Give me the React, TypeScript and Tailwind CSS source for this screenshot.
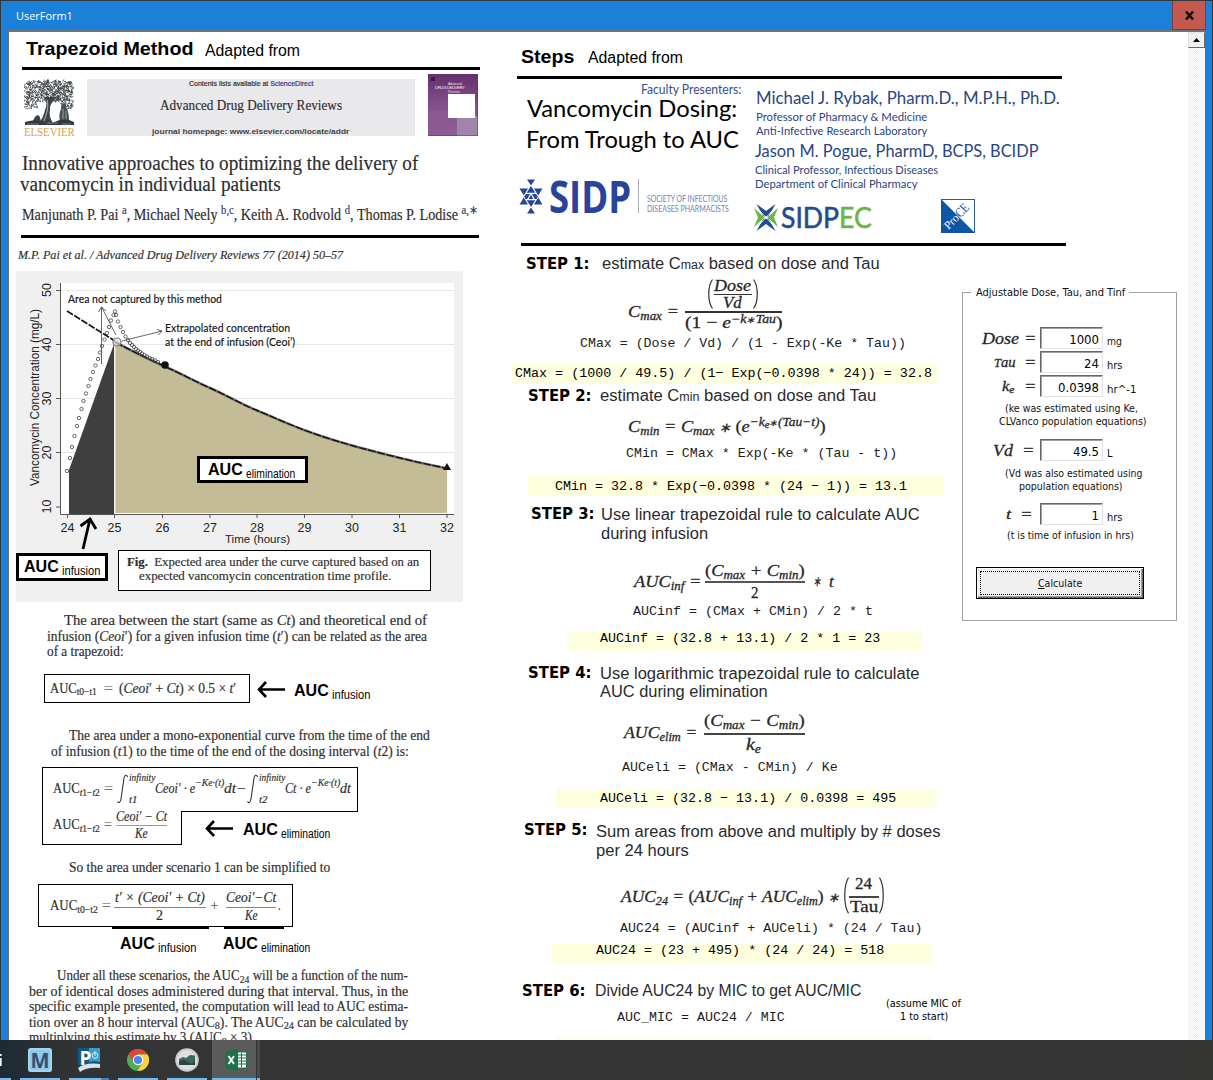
import { useLayoutEffect, useRef, useState } from "react";
import type { ReactNode } from "react";

/** One line of text, stretched or condensed to the width of its box. */
function T({ className = "", children }: { className?: string; children: ReactNode }) {
  const box = useRef<HTMLDivElement>(null);
  const ink = useRef<HTMLSpanElement>(null);
  const [k, setK] = useState(1);
  useLayoutEffect(() => {
    if (box.current && ink.current && ink.current.offsetWidth > 0) {
      setK(box.current.clientWidth / ink.current.offsetWidth);
    }
  }, []);
  return (
    <div ref={box} className={"shrink-0 whitespace-nowrap " + className}>
      <span ref={ink} className="inline-block origin-left" style={{ transform: `scaleX(${k})` }}>
        {children}
      </span>
    </div>
  );
}

const serif = "font-['Liberation_Serif',serif] text-[#2b2b2b] [-webkit-text-stroke:0.2px_#444] ";
const sans = "font-['Liberation_Sans',sans-serif] ";
const lato = "font-['Lato',sans-serif] ";
const tahoma = "font-['DejaVu_Sans_Condensed','DejaVu_Sans',sans-serif] ";
const math = "font-['Liberation_Serif',serif] italic text-[#222] [-webkit-text-stroke:0.3px_#333] [&_sub]:text-[70%] ";
const mono = "font-['Liberation_Mono',monospace] ";

function AucLabel({ kind }: { kind: "infusion" | "elimination" }) {
  return (
    <div className={sans + "flex text-black [-webkit-text-stroke:0px]"}>
      <T className="w-[35px] text-[16.5px] leading-[20px] font-bold">AUC</T>
      <T
        className={
          kind === "infusion"
            ? "mt-[5px] ml-[3px] w-[38px] text-[12px] leading-[20px]"
            : "mt-[5px] ml-[3px] w-[49px] text-[12px] leading-[20px]"
        }
      >
        {kind}
      </T>
    </div>
  );
}

function LeftArrow() {
  return (
    <svg width="28" height="17" viewBox="0 0 28 17" fill="none" stroke="#000" strokeWidth="2.6">
      <path d="M28 8.5H2M9 1L2 8.5L9 16" />
    </svg>
  );
}

function ElsevierTree() {
  const strokes: string[] = [];
  let s = 7;
  const rnd = () => ((s = (s * 16807) % 2147483647) / 2147483647);
  for (let i = 0; i < 900; i++) {
    const x = 1 + rnd() * 48;
    const edge = Math.abs(x - 25) / 25;
    const y = 1 + edge * 2 + rnd() * (edge > 0.5 ? 27 : 21);
    strokes.push(`M${x.toFixed(1)} ${y.toFixed(1)}l${(rnd() * 4 - 2).toFixed(1)} ${(rnd() * 3 - 1.5).toFixed(1)}`);
  }
  return (
    <svg width="51" height="47" viewBox="0 0 51 47" fill="none">
      <path d={strokes.join("")} stroke="#3b4245" strokeWidth="0.9" />
      <path d="M20 18c3 4 3 9 1 13c-1 5-3 9-6 13h14c-3-4-4-9-3-14c0-5 3-8 7-12" fill="#3d4447" />
      <path d="M23 21c2 6 0 13-3 21" stroke="#ccc" strokeWidth="0.8" />
      <path d="M38 25c3-2 5 0 4 3c3 5 3 10 3 15h-9c-1-5-1-9 1-13z" fill="#4a5154" />
      <path d="M39 30v12M42 32v9" stroke="#bbb" strokeWidth="0.7" />
      <path d="M11 38c2-3 5-2 5 1l2 6H7z" fill="#3d4447" />
      <path d="M1 43q8-3 16 0t16-1t17 1v3H1z" fill="#33393c" />
      <path d="M3 45h12M24 44h10M38 45h9" stroke="#aaa" strokeWidth="0.6" />
    </svg>
  );
}

function Cover() {
  return (
    <svg className="mt-[4px] ml-[13px] shrink-0" width="50" height="62" viewBox="0 0 50 62">
      <defs>
        <linearGradient id="cov" x1="0" y1="0" x2="0" y2="1">
          <stop offset="0" stopColor="#64306c" />
          <stop offset="0.6" stopColor="#86558f" />
          <stop offset="1" stopColor="#8d5f97" />
        </linearGradient>
      </defs>
      <rect width="50" height="62" fill="url(#cov)" />
      <rect x="29" y="42" width="21" height="20" fill="#a184ac" />
      <rect x="0" y="37" width="20" height="25" fill="#8a5a90" />
      <rect x="3" y="3" width="4" height="4" fill="#3d1a48" />
      <path d="M50 0V62H0" fill="none" stroke="#54345e" />
      <text x="20" y="11" fontSize="3.6" fill="#e6d6ea" fontFamily="Liberation Sans" textLength="14">Advanced</text>
      <text x="7" y="15" fontSize="4.4" fill="#f2e8f4" fontFamily="Liberation Sans" textLength="30">DRUG DELIVERY</text>
      <text x="20" y="19" fontSize="3.4" fill="#e6d6ea" fontFamily="Liberation Sans" textLength="12">Reviews</text>
      <rect x="20" y="20" width="27" height="24" fill="#fff" />
    </svg>
  );
}

const rising = [
  [67, 471], [70, 458], [72, 447], [74.5, 436], [77, 426], [79, 418], [81.5, 409], [83.5, 401], [86, 393.5],
  [88.5, 386], [90.5, 379], [93, 372], [95.5, 365.5], [98, 359], [100, 352.5], [102, 346], [104.5, 339.5],
  [107, 333], [109, 327], [111, 320.5], [113.5, 315], [115, 311.5], [116, 315], [118, 321.5], [120.5, 327],
  [123, 332], [125.5, 336.5], [128, 340], [130, 343], [132, 345], [134, 347], [136, 349], [138, 350.5],
  [140, 352], [142, 353.5], [144.5, 355], [147, 356.5], [149.5, 358], [152, 359], [155, 360.5], [158, 362],
];
const decay = "M115 342C132 351 148 359 165 366.500S195 381.500 210 388S241 404 257 410.500S288 424 304 430S336 441 352 445.500S384 454 400 458S431 465 447 468.500";

function Figure() {
  return (
    <div className="relative mt-[6px] ml-[7px] h-[331px] w-[447px] shrink-0 bg-[#f0f0f0]">
      <svg width="447" height="331" viewBox="16 271 447 331" fontFamily="Liberation Sans" fill="#222">
        <rect x="60" y="283" width="394" height="231" fill="#fff" />
        <path d="M60 290.500H454M60 344.500H454M60 398.500H454M60 452.500H454" stroke="#e6e6e6" />
        <path d="M69 470L114 344V514H69z" fill="#3f3f3f" />
        <path d={decay + "V513H115z"} fill="#c4bc96" />
        <path d="M115 344V513" stroke="#e8e6da" strokeWidth="1.4" />
        <path d="M60.500 283V514.500H454" fill="none" stroke="#555" />
        <path
          d="M56 290.500H60M56 344.500H60M56 398.500H60M56 452.500H60M56 507H60M67.500 514V518M114.500 514V518M162.500 514V518M210 514V518M257 514V518M304.500 514V518M352 514V518M399.500 514V518M447 514V518"
          stroke="#555"
        />
        <path d={decay} fill="none" stroke="#777" strokeWidth="2.6" />
        <path d="M67 311L115 341" stroke="#111" strokeWidth="1.6" strokeDasharray="7 1.500" />
        <path d={decay} fill="none" stroke="#111" strokeWidth="1.4" strokeDasharray="8 1.500" />
        {rising.map(([x, y]) => (
          <circle key={x + "-" + y} cx={x} cy={y} r="1.7" fill="none" stroke="#444" strokeWidth="0.8" />
        ))}
        <circle cx="117" cy="342" r="4" fill="#ddd" fillOpacity="0.7" stroke="#777" strokeWidth="1.2" />
        <circle cx="165" cy="365" r="3.8" fill="#111" />
        <path d="M443 470L447 463L451 470z" fill="#111" />
        <path
          d="M101.500 364V307M98.500 312L101.500 307L106 311M116 335L101.500 307M122 341L162 331M157 329.500L162 331L158.500 335"
          fill="none"
          stroke="#555"
          strokeWidth="0.9"
        />
        <path d="M83 549L90 519M80.500 526L90 519L96 529" fill="none" stroke="#000" strokeWidth="2.8" />
        <g fontSize="11.2" fontFamily="Lato" fill="#111" stroke="#222" strokeWidth="0.15">
          <text x="68" y="303" textLength="154" lengthAdjust="spacingAndGlyphs">Area not captured by this method</text>
          <text x="165" y="332" textLength="125" lengthAdjust="spacingAndGlyphs">Extrapolated concentration</text>
          <text x="165" y="345.500" textLength="130" lengthAdjust="spacingAndGlyphs">at the end of infusion (Ceoi’)</text>
        </g>
        <g fontSize="12.5" textAnchor="middle">
          {[67.5, 114.5, 162.5, 210, 257, 304.5, 352, 399.5, 447].map((x, i) => (
            <text key={x} x={x} y="532">{24 + i}</text>
          ))}
          {[290, 344.5, 398.5, 452.5, 506.5].map((y, i) => (
            <text key={y} transform={`translate(50.500 ${y}) rotate(-90)`}>{50 - i * 10}</text>
          ))}
        </g>
        <text x="225" y="543" fontSize="11.300" textLength="65" lengthAdjust="spacingAndGlyphs">Time (hours)</text>
        <text transform="translate(38.500 486) rotate(-90)" fontSize="12" textLength="177" lengthAdjust="spacingAndGlyphs">
          Vancomycin Concentration (mg/L)
        </text>
      </svg>
      <div className="absolute top-[185px] left-[181px] h-[27px] w-[111px] border-[3px] border-black bg-white pl-[8px]">
        <AucLabel kind="elimination" />
      </div>
      <div className="absolute top-[282px] left-0 h-[28px] w-[92px] border-[3px] border-black bg-white pl-[5px]">
        <AucLabel kind="infusion" />
      </div>
      <div className={serif + "absolute top-[279px] left-[102px] h-[41px] w-[313px] border border-black bg-white pt-[4px] text-[13.5px]"}>
        <T className="ml-[8px] w-[292px] leading-[14px]">
          <b>Fig.</b>&nbsp; Expected area under the curve captured based on an
        </T>
        <T className="ml-[20px] w-[252px] leading-[14px]">expected vancomycin concentration time profile.</T>
      </div>
    </div>
  );
}

function Integral({ low }: { low: string }) {
  return (
    <div className="flex">
      <svg width="11" height="30" viewBox="0 0 11 30" fill="none" stroke="#333" strokeWidth="1.1">
        <path d="M10.500 3C10 0.500 7.500 0.500 7 4L4 25C3.500 28.500 1.500 29.500 0.500 27.500" />
      </svg>
      <div>
        <T className="mt-[-3px] ml-[1px] w-[26px] text-[10px] leading-[14px]">infinity</T>
        <T className="mt-[9px] ml-[1px] w-[8px] text-[9.500px] leading-[12px]">{low}</T>
      </div>
    </div>
  );
}

function LeftColumn() {
  return (
    <div className="flex w-[496px] shrink-0 flex-col">
      <div className={sans + "flex h-[35px] shrink-0 text-black"}>
        <T className="mt-[6px] ml-[17px] w-[168px] text-[19px] leading-[21px] font-bold">Trapezoid Method</T>
        <T className="mt-[8px] ml-[11px] w-[95px] text-[16px] leading-[21px]">Adapted from</T>
      </div>
      <div className="ml-[13px] h-[3px] w-[458px] shrink-0 bg-black" />
      <div className="flex h-[66px] shrink-0">
        <div className="mt-[9px] ml-[15px] w-[51px]">
          <ElsevierTree />
          <T className="w-[51px] font-['Liberation_Serif',serif] text-[12px] leading-[12px] text-[#d5a04d]">ELSEVIER</T>
        </div>
        <div className="mt-[9px] ml-[12px] flex h-[57px] w-[328px] flex-col bg-[#e9e9eb]">
          <T className={sans + "ml-[102px] w-[124px] text-[7.5px] leading-[9px] text-[#333] [-webkit-text-stroke:0.2px]"}>
            Contents lists available at <span className="text-[#2d3a8c]">ScienceDirect</span>
          </T>
          <T className={serif + "mt-[8px] ml-[73px] w-[182px] text-[15px] leading-[19px]"}>Advanced Drug Delivery Reviews</T>
          <T className={sans + "mt-[12px] ml-[65px] w-[197px] text-[8px] leading-[9px] font-bold text-[#444]"}>
            journal homepage: www.elsevier.com/locate/addr
          </T>
        </div>
        <Cover />
      </div>
      <div className={serif + "shrink-0 text-[20px] leading-[20px]"}>
        <T className="mt-[17px] ml-[13px] w-[396px]">Innovative approaches to optimizing the delivery of</T>
        <T className="mt-[1px] ml-[11px] w-[261px]">vancomycin in individual patients</T>
      </div>
      <T className={serif + "mt-[10px] ml-[13px] h-[20px] w-[456px] text-[16px] leading-[21px] [&_sup]:text-[#2d3a8c]"}>
        Manjunath P. Pai <sup>a</sup>, Michael Neely <sup>b,c</sup>, Keith A. Rodvold <sup>d</sup>, Thomas P. Lodise <sup>a,∗</sup>
      </T>
      <div className="mt-[11px] ml-[12px] h-[3px] w-[458px] shrink-0 bg-black" />
      <T className={serif + "mt-[7px] ml-[9px] w-[325px] text-[13.5px] leading-[20px] italic"}>
        M.P. Pai et al. / Advanced Drug Delivery Reviews 77 (2014) 50–57
      </T>
      <Figure />
      <div className={serif + "mt-[10px] h-[48px] shrink-0 text-[14.3px] leading-[16px]"}>
        <T className="ml-[55px] w-[363px]">The area between the start (same as <i>Ct</i>) and theoretical end of</T>
        <T className="ml-[38px] w-[380px]">infusion (<i>Ceoi</i>′) for a given infusion time (<i>t</i>′) can be related as the area</T>
        <T className="mt-[-1px] ml-[38px] w-[77px]">of a trapezoid:</T>
      </div>
      <div className="mt-[14px] ml-[35px] flex h-[29px] shrink-0">
        <div className={serif + "flex w-[206px] items-center border border-black text-[14px] leading-[20px]"}>
          <T className="ml-[5px] w-[47px]">AUC<sub>t0−t1</sub></T>
          <T className="ml-[7px] w-[9px] text-[#888]">=</T>
          <T className="ml-[6px] w-[117px]">(<i>Ceoi</i>′ + <i>Ct</i>) × 0.5 × <i>t</i>′</T>
        </div>
        <div className="mt-[7px] ml-[7px]"><LeftArrow /></div>
        <div className="mt-[6px] ml-[9px]"><AucLabel kind="infusion" /></div>
      </div>
      <div className={serif + "mt-[24px] h-[32px] shrink-0 text-[14.3px] leading-[16px]"}>
        <T className="ml-[60px] w-[361px]">The area under a mono-exponential curve from the time of the end</T>
        <T className="ml-[42px] w-[358px]">of infusion (<i>t</i>1) to the time of the end of the dosing interval (<i>t</i>2) is:</T>
      </div>
      <div className={serif + "mt-[8px] ml-[33px] shrink-0 text-[14px] leading-[20px]"}>
        <div className="flex h-[45px] w-[316px] border border-black">
          <T className="mt-[11px] ml-[10px] w-[47px]">AUC<sub><i>t</i>1−<i>t</i>2</sub></T>
          <T className="mt-[11px] ml-[4px] w-[9px] text-[#888]">=</T>
          <div className="mt-[6px] ml-[4px] w-[38px] italic"><Integral low="t1" /></div>
          <T className="mt-[11px] w-[40px] italic">Ceoi′ · e</T>
          <T className="mt-[5px] w-[29px] text-[10.5px] italic">−Ke·(t)</T>
          <T className="mt-[11px] w-[22px] italic">dt−</T>
          <div className="mt-[6px] ml-[1px] w-[38px] italic"><Integral low="t2" /></div>
          <T className="mt-[11px] w-[26px] italic">Ct · e</T>
          <T className="mt-[5px] w-[29px] text-[10.5px] italic">−Ke·(t)</T>
          <T className="mt-[11px] w-[11px] italic">dt</T>
        </div>
        <div className="mt-[-1px] flex h-[34px]">
          <div className="relative flex w-[140px] border-r border-b border-l border-black bg-white">
            <T className="mt-[4px] ml-[10px] w-[47px]">AUC<sub><i>t</i>1−<i>t</i>2</sub></T>
            <T className="mt-[4px] ml-[4px] w-[8px] text-[#888]">=</T>
            <div className="mt-[-3px] ml-[4px] w-[51px] italic">
              <T className="w-[51px] leading-[17px]">Ceoi′ − Ct</T>
              <div className="h-px bg-[#999]" />
              <T className="ml-[19px] w-[13px] leading-[15px]">Ke</T>
            </div>
          </div>
          <div className="mt-[9px] ml-[23px]"><LeftArrow /></div>
          <div className="mt-[8px] ml-[10px]"><AucLabel kind="elimination" /></div>
        </div>
      </div>
      <T className={serif + "mt-[14px] ml-[60px] h-[16px] w-[261px] text-[14.3px] leading-[16px]"}>So the area under scenario 1 can be simplified to</T>
      <div className={serif + "mt-[9px] ml-[29px] flex h-[43px] w-[255px] shrink-0 border border-black text-[14px] leading-[20px]"}>
        <T className="mt-[11px] ml-[11px] w-[48px]">AUC<sub>t0−t2</sub></T>
        <T className="mt-[11px] ml-[4px] w-[9px] text-[#888]">=</T>
        <div className="mt-[4px] ml-[3px] w-[92px]">
          <T className="ml-[1px] w-[90px] leading-[18px] italic">t′ × (Ceoi′ + Ct)</T>
          <div className="h-px bg-[#888]" />
          <T className="ml-[42px] w-[7px] leading-[15px]">2</T>
        </div>
        <T className="mt-[11px] ml-[5px] w-[7px] text-[#777]">+</T>
        <div className="mt-[4px] ml-[8px] w-[50px] italic">
          <T className="w-[50px] leading-[18px]">Ceoi′−Ct</T>
          <div className="h-px bg-[#888]" />
          <T className="ml-[19px] w-[13px] leading-[15px]">Ke</T>
        </div>
        <T className="mt-[11px] ml-[2px] w-[3px]">.</T>
      </div>
      <div className="flex h-[2px] shrink-0">
        <div className="ml-[103px] w-[97px] bg-black" />
        <div className="ml-[15px] w-[60px] bg-black" />
      </div>
      <div className="mt-[4px] flex h-[20px] shrink-0">
        <div className="ml-[111px]"><AucLabel kind="infusion" /></div>
        <div className="ml-[27px]"><AucLabel kind="elimination" /></div>
      </div>
      <div className={serif + "mt-[15px] shrink-0 text-[14.3px] leading-[15.6px]"}>
        <T className="ml-[48px] w-[351px]">Under all these scenarios, the AUC<sub>24</sub> will be a function of the num-</T>
        <T className="ml-[20px] w-[379px]">ber of identical doses administered during that interval. Thus, in the</T>
        <T className="ml-[20px] w-[379px]">specific example presented, the computation will lead to AUC estima-</T>
        <T className="ml-[20px] w-[379px]">tion over an 8 hour interval (AUC<sub>8</sub>). The AUC<sub>24</sub> can be calculated by</T>
        <T className="ml-[20px] w-[223px]">multiplying this estimate by 3 (AUC<sub>8</sub> × 3)</T>
      </div>
    </div>
  );
}

function SidpMark() {
  return (
    <svg width="24" height="35" viewBox="0 0 24 35" fill="#27439a">
      <path d="M8 0.500H16L12 6.500z M8 34.500H16L12 28.500z" />
      <path d="M12 7L16.300 13.800H7.700z M12 28L7.700 21.200H16.300z" />
      <path d="M0.500 9.500H9L4.800 16.500z M15 9.500H23.500L19.200 16.500z" />
      <path d="M0.500 25.500L4.800 18.500L9 25.500z M15 25.500L19.200 18.500L23.500 25.500z" />
      <path d="M7 15H11L8.300 20H6.400L5.200 17.500z M17 15H13L15.700 20H17.600L18.800 17.500z M12 15.500L14.300 20H9.700z" />
    </svg>
  );
}

function SidpecMark() {
  return (
    <svg width="24" height="27" viewBox="0 0 24 27">
      <path d="M2.500 0L12 7L21.500 0L14.500 12.500H9.500z" fill="#1f4d8f" />
      <path d="M2.500 27L12 20L21.500 27L14.500 14.500H9.500z" fill="#1f4d8f" />
      <path d="M0 4L10.500 13.500L0 23L4 13.500z" fill="#6db544" />
      <path d="M24 4L13.500 13.500L24 23L20 13.500z" fill="#6db544" />
      <path d="M6 7L18 20M18 7L6 20" stroke="#fff" strokeWidth="0.8" />
      <circle cx="12" cy="13.500" r="1.6" fill="#fff" />
    </svg>
  );
}

function ProCe() {
  return (
    <svg width="34" height="34" viewBox="0 0 34 34" fontFamily="Liberation Serif">
      <rect x="0.500" y="0.500" width="33" height="33" fill="#fff" stroke="#2a5d9c" />
      <path d="M0 0L34 34H0z" fill="#0d55a5" />
      <g transform="translate(7.500 31) rotate(-45)">
        <text x="0" y="0" fontSize="11.500" fill="#fff" textLength="16" lengthAdjust="spacingAndGlyphs">Pro</text>
        <text x="16.500" y="0" fontSize="13.500" fill="#0d55a5" textLength="14" lengthAdjust="spacingAndGlyphs">CE</text>
      </g>
    </svg>
  );
}

function PresenterHeader() {
  return (
    <>
      <div className={sans + "flex h-[44px] shrink-0 text-black"}>
        <T className="mt-[15px] ml-[16px] w-[53px] text-[18.5px] leading-[20px] font-bold">Steps</T>
        <T className="mt-[15px] ml-[14px] w-[95px] text-[16px] leading-[21px]">Adapted from</T>
      </div>
      <div className="ml-[12px] h-[3px] w-[545px] shrink-0 bg-black" />
      <div className={lato + "flex h-[164px] shrink-0"}>
        <div className="w-[249px]">
          <T className="mt-[4px] ml-[136px] w-[100px] text-[12.5px] leading-[14px] text-[#33508c]">Faculty Presenters:</T>
          <T className="ml-[22px] w-[210px] text-[23.5px] leading-[23px] text-black">Vancomycin Dosing:</T>
          <T className="mt-[8px] ml-[21px] w-[213px] text-[23.5px] leading-[23px] text-black">From Trough to AUC</T>
          <div className="mt-[28px] ml-[14px] flex">
            <SidpMark />
            <T className="ml-[6px] w-[82px] font-['Open_Sans',sans-serif] text-[45px] leading-[33px] font-bold text-[#27439a]">SIDP</T>
            <div className="ml-[7px] h-[34px] w-px bg-[#aab]" />
            <div className="mt-[15px] ml-[8px] w-[82px] text-[8.5px] leading-[10px] text-[#7382aa]">
              <T className="w-[80px]">SOCIETY OF INFECTIOUS</T>
              <T className="w-[82px]">DISEASES PHARMACISTS</T>
            </div>
          </div>
        </div>
        <div className="text-[#2a4584]">
          <T className="mt-[9px] ml-[2px] w-[304px] text-[16.5px] leading-[20px]">Michael J. Rybak, Pharm.D., M.P.H., Ph.D.</T>
          <T className="mt-[2px] ml-[2px] w-[171px] text-[12px] leading-[14px]">Professor of Pharmacy &amp; Medicine</T>
          <T className="ml-[2px] w-[171px] text-[12px] leading-[14px]">Anti-Infective Research Laboratory</T>
          <T className="mt-[3px] ml-[1px] w-[284px] text-[16.5px] leading-[20px]">Jason M. Pogue, PharmD, BCPS, BCIDP</T>
          <T className="mt-[2px] ml-[1px] w-[183px] text-[12px] leading-[14px]">Clinical Professor, Infectious Diseases</T>
          <T className="ml-[1px] w-[163px] text-[12px] leading-[14px]">Department of Clinical Pharmacy</T>
          <div className="mt-[8px] flex">
            <div className="mt-[5px]"><SidpecMark /></div>
            <T className="mt-[7px] ml-[3px] w-[91px] text-[29.5px] leading-[22px] text-[#1f4d8f] [-webkit-text-stroke:0.6px]">
              SIDP<span className="text-[#6db544]">EC</span>
            </T>
            <div className="ml-[69px]"><ProCe /></div>
          </div>
        </div>
      </div>
      <div className="ml-[16px] h-[3px] w-[545px] shrink-0 bg-black" />
    </>
  );
}

const stepNo = "font-['DejaVu_Sans_Condensed','DejaVu_Sans',sans-serif] text-[15.5px] font-bold text-black ";
const stepTxt = "font-['Liberation_Sans',sans-serif] text-[16px] text-[#2a2a2e] ";
const hilite = mono + "shrink-0 bg-[#feffdf] text-[13.3px] text-black ";
const code = mono + "text-[13px] leading-[20px] text-[#1c1c1c] ";

function Paren({ h, flip }: { h: number; flip?: boolean }) {
  return (
    <svg className={flip ? "-scale-x-100" : ""} width="6" height={h} viewBox="0 0 6 30" preserveAspectRatio="none" fill="none" stroke="#333" strokeWidth="1.2">
      <path d="M5.500 0.500C0.500 7 0.500 23 5.500 29.500" />
    </svg>
  );
}

function Steps() {
  return (
    <div className="flex w-[457px] shrink-0 flex-col leading-[20px]">
      <div className="mt-[8px] flex shrink-0">
        <T className={stepNo + "ml-[21px] w-[63px]"}>STEP 1:</T>
        <T className={stepTxt + "ml-[13px] w-[278px]"}>estimate C<span className="text-[12px]">max</span> based on dose and Tau</T>
      </div>
      <div className={math + "mt-[4px] flex h-[54px] shrink-0 text-[17px]"}>
        <T className="mt-[23px] ml-[123px] w-[51px]">C<sub>max</sub> =</T>
        <div className="ml-[6px] w-[97px]">
          <div className="ml-[22px] flex h-[32px]">
            <Paren h={30} />
            <div className="ml-[1px] w-[38px] text-[16px]">
              <T className="mt-[-2px] w-[37px] leading-[17px]">Dose</T>
              <div className="h-px bg-[#333]" />
              <T className="ml-[9px] w-[19px] leading-[16px]">Vd</T>
            </div>
            <div className="ml-[1px]"><Paren h={30} flip /></div>
          </div>
          <div className="h-[1.500px] bg-[#333]" />
          <T className="w-[97px]">
            <span className="not-italic">(1 − </span>e<sup className="top-[-5px] text-[12px]">−k<span className="text-[9px]">∗</span>Tau</sup><span className="not-italic">)</span>
          </T>
        </div>
      </div>
      <T className={code + "mt-[1px] ml-[75px] w-[326px]"}>CMax = (Dose / Vd) / (1 - Exp(-Ke * Tau))</T>
      <div className={hilite + "mt-[9px] ml-[7px] h-[21px] w-[425px] leading-[22px]"}>
        <T className="ml-[3px] w-[417px]">CMax = (1000 / 49.5) / (1− Exp(−0.0398 * 24)) = 32.8</T>
      </div>
      <div className="mt-[2px] flex shrink-0">
        <T className={stepNo + "ml-[23px] w-[63px]"}>STEP 2:</T>
        <T className={stepTxt + "ml-[9px] w-[276px]"}>estimate C<span className="text-[12px]">min</span> based on dose and Tau</T>
      </div>
      <T className={math + "mt-[10px] ml-[123px] h-[20px] w-[198px] text-[17px]"}>
        C<sub>min</sub> = C<sub>max</sub> <span className="text-[13px]">∗</span> <span className="not-italic">(</span>e<sup className="text-[12.5px]">−k<span className="relative top-[2px] text-[10px]">e</span><span className="text-[9px]">∗</span>(Tau−t)</sup><span className="not-italic">)</span>
      </T>
      <T className={code + "mt-[7px] ml-[121px] w-[271px]"}>CMin = CMax * Exp(-Ke * (Tau - t))</T>
      <div className={hilite + "mt-[12px] ml-[23px] h-[20px] w-[416px] leading-[21px]"}>
        <T className="ml-[27px] w-[352px]">CMin = 32.8 * Exp(−0.0398 * (24 − 1)) = 13.1</T>
      </div>
      <div className="mt-[8px] flex shrink-0">
        <T className={stepNo + "ml-[26px] w-[63px]"}>STEP 3:</T>
        <T className={stepTxt + "mt-[1px] ml-[7px] w-[319px]"}>Use linear trapezoidal rule to calculate AUC</T>
      </div>
      <T className={stepTxt + "mt-[-1px] ml-[96px] w-[107px]"}>during infusion</T>
      <div className={math + "mt-[17px] flex h-[42px] shrink-0 items-center text-[17px]"}>
        <T className="ml-[129px] w-[67px]">AUC<sub>inf</sub> =</T>
        <div className="ml-[4px] w-[100px]">
          <T className="w-[100px]"><span className="not-italic">(</span>C<sub>max</sub> + C<sub>min</sub><span className="not-italic">)</span></T>
          <div className="h-[2px] bg-[#555]" />
          <T className="ml-[46px] w-[8px] not-italic">2</T>
        </div>
        <T className="ml-[8px] w-[8px] text-[14px]">∗</T>
        <T className="ml-[8px] w-[5px]">t</T>
      </div>
      <T className={code + "mt-[-1px] ml-[128px] w-[240px]"}>AUCinf = (CMax + CMin) / 2 * t</T>
      <div className={hilite + "mt-[10px] ml-[63px] h-[19px] w-[353px] leading-[13px]"}>
        <T className="ml-[32px] w-[280px]">AUCinf = (32.8 + 13.1) / 2 * 1 = 23</T>
      </div>
      <div className="mt-[12px] flex shrink-0">
        <T className={stepNo + "ml-[23px] w-[63px]"}>STEP 4:</T>
        <T className={stepTxt + "mt-[1px] ml-[9px] w-[319px]"}>Use logarithmic trapezoidal rule to calculate</T>
      </div>
      <T className={stepTxt + "mt-[-2px] ml-[95px] w-[168px]"}>AUC during elimination</T>
      <div className={math + "mt-[9px] flex h-[44px] shrink-0 items-center text-[17px]"}>
        <T className="ml-[119px] w-[73px]">AUC<sub>elim</sub> =</T>
        <div className="ml-[7px] w-[101px]">
          <T className="w-[101px]"><span className="not-italic">(</span>C<sub>max</sub> − C<sub>min</sub><span className="not-italic">)</span></T>
          <div className="mt-[2px] h-[1.500px] bg-[#444]" />
          <T className="ml-[42px] w-[15px]">k<sub>e</sub></T>
        </div>
      </div>
      <T className={code + "mt-[3px] ml-[117px] w-[216px]"}>AUCeli = (CMax - CMin) / Ke</T>
      <div className={hilite + "mt-[11px] ml-[51px] h-[19px] w-[380px] leading-[19px]"}>
        <T className="ml-[44px] w-[296px]">AUCeli = (32.8 − 13.1) / 0.0398 = 495</T>
      </div>
      <div className="mt-[12px] flex shrink-0">
        <T className={stepNo + "ml-[19px] w-[63px]"}>STEP 5:</T>
        <T className={stepTxt + "mt-[2px] ml-[9px] w-[345px]"}>Sum areas from above and multiply by # doses</T>
      </div>
      <T className={stepTxt + "mt-[-1px] ml-[91px] w-[93px]"}>per 24 hours</T>
      <div className={math + "mt-[14px] flex h-[41px] shrink-0 text-[17px]"}>
        <T className="mt-[12px] ml-[116px] w-[218px]">
          AUC<sub>24</sub> = <span className="not-italic">(</span>AUC<sub>inf</sub> + AUC<sub>elim</sub><span className="not-italic">)</span> <span className="text-[13px]">∗</span>
        </T>
        <div className="mt-[2px] ml-[4px]"><Paren h={37} /></div>
        <div className="w-[30px] not-italic">
          <T className="ml-[6px] w-[17px] leading-[17px]">24</T>
          <div className="mt-[4px] h-[1.500px] bg-[#444]" />
          <T className="ml-[1px] w-[28px] leading-[18px]">Tau</T>
        </div>
        <div className="mt-[2px]"><Paren h={37} flip /></div>
      </div>
      <T className={code + "mt-[3px] ml-[115px] w-[302px]"}>AUC24 = (AUCinf + AUCeli) * (24 / Tau)</T>
      <div className={hilite + "mt-[5px] ml-[47px] h-[20px] w-[380px] leading-[13px]"}>
        <T className="ml-[44px] w-[288px]">AUC24 = (23 + 495) * (24 / 24) = 518</T>
      </div>
      <div className="mt-[17px] flex h-[21px] shrink-0">
        <T className={stepNo + "ml-[17px] w-[63px] leading-[21px]"}>STEP 6:</T>
        <T className={stepTxt + "ml-[10px] w-[266px]"}>Divide AUC24 by MIC to get AUC/MIC</T>
      </div>
      <div className="flex h-[26px] shrink-0">
        <T className={code + "mt-[6px] ml-[112px] w-[168px]"}>AUC_MIC = AUC24 / MIC</T>
        <div className={tahoma + "mt-[-5px] ml-[101px] w-[75px] text-[10.500px] leading-[13px] text-black"}>
          <T className="w-[75px]">(assume MIC of</T>
          <T className="ml-[14px] w-[48px]">1 to start)</T>
        </div>
      </div>
      <div className="mt-[9px] ml-[51px] h-[6px] w-[376px] shrink-0 bg-[#feffdf]" />
    </div>
  );
}

function Field({ label, eq, value, unit }: { label: ReactNode; eq: string; value: string; unit: ReactNode }) {
  return (
    <div className="flex h-[24px]">
      <div className={math + "flex w-[77px] justify-end text-[17px] leading-[23px]"}>
        {label}
        <T className={eq}>=</T>
      </div>
      <div className="flex h-[22px] w-[63px] items-center justify-end border border-t-[#696969] border-r-[#e3e3e3] border-b-[#e3e3e3] border-l-[#696969] bg-white pr-[3px] shadow-[inset_1px_1px_0_#a0a0a0]">
        <span className={tahoma + "pt-[3px] text-[13px] leading-[18px] text-black"}>{value}</span>
      </div>
      <div className={tahoma + "mt-[5px] ml-[4px] text-[11px] leading-[20px] text-[#111]"}>{unit}</div>
    </div>
  );
}

function AdjustPanel() {
  return (
    <div className={tahoma + "mt-[46px] flex h-[329px] w-[215px] shrink-0 flex-col border border-[#a0a0a0] text-[11px] leading-[13px] text-[#111]"}>
      <div className="mt-[-10px] ml-[8px] w-[158px] bg-white pl-[5px] leading-[20px]">
        <T className="w-[149px]">Adjustable Dose, Tau, and Tinf</T>
      </div>
      <div className="mt-[24px]">
        <Field label={<T className="w-[37px]">Dose</T>} eq="ml-[5px] mr-[4px] w-[12px]" value="1000" unit={<T className="w-[15px]">mg</T>} />
        <Field label={<T className="w-[22px] text-[14px]"><span className="text-[12px]">T</span>au</T>} eq="ml-[8px] mr-[4px] w-[12px]" value="24" unit={<T className="w-[16px]">hrs</T>} />
        <Field label={<T className="w-[13px] text-[14px]">k<sub>e</sub></T>} eq="ml-[9px] mr-[4px] w-[12px]" value="0.0398" unit={<T className="w-[30px]">hr^-1</T>} />
      </div>
      <T className="mt-[3px] ml-[42px] w-[133px]">(ke was estimated using Ke,</T>
      <T className="ml-[36px] w-[148px]">CLVanco population equations)</T>
      <div className="mt-[11px]">
        <Field label={<T className="w-[20px]">Vd</T>} eq="ml-[9px] mr-[6px] w-[12px]" value="49.5" unit="L" />
      </div>
      <T className="mt-[4px] ml-[42px] w-[137px]">(Vd was also estimated using</T>
      <T className="ml-[56px] w-[104px]">population equations)</T>
      <div className="mt-[10px]">
        <Field label={<T className="w-[5px] text-[15px]">t</T>} eq="ml-[9px] mr-[8px] w-[12px]" value="1" unit={<T className="w-[16px]">hrs</T>} />
      </div>
      <T className="mt-[2px] ml-[44px] w-[127px]">(t is time of infusion in hrs)</T>
      <button className="mt-[25px] ml-[13px] flex h-[32px] w-[168px] items-stretch border border-black bg-[#f0f0f0] p-[3px] shadow-[inset_1px_1px_0_#fff,inset_-1px_-1px_0_#696969,inset_-2px_-2px_0_#a0a0a0]">
        <span className="flex flex-1 items-center justify-center border border-dotted border-black">
          <T className="w-[44px]"><u>C</u>alculate</T>
        </span>
      </button>
    </div>
  );
}

function Taskbar() {
  return (
    <div className="flex h-[40px] shrink-0 bg-[linear-gradient(90deg,#1d2a33_0px,#303234_60px,#343434_140px,#353534_1213px)]">
      <div className="flex w-[11px] flex-col justify-between">
        <svg width="3" height="30" viewBox="0 0 3 30"><path d="M0 14h1.700v2H0zM0 18h1.700v8H0z" fill="#e8f4ff" /></svg>
        <div className="h-[2px] bg-[#76b9ed]" />
      </div>
      <div className="ml-[9px] flex w-[40px] flex-col items-center justify-between pt-[8px]">
        <svg width="24" height="24" viewBox="0 0 24 24">
          <rect width="24" height="24" rx="2.500" fill="#8fc8ec" />
          <rect x="1" y="1" width="22" height="22" rx="2" fill="none" stroke="#b8e0f6" />
          <text x="2.500" y="20" fontSize="22" fontFamily="Open Sans" fontWeight="700" fill="#35506e" textLength="19" lengthAdjust="spacingAndGlyphs">M</text>
        </svg>
        <div className="h-[2px] w-full bg-[#76b9ed]" />
      </div>
      <div className="ml-[9px] flex w-[40px] flex-col items-center justify-between pt-[8px]">
        <svg width="24" height="24" viewBox="0 0 24 24">
          <path d="M1 0H20Q23 0 23 3V17H1z" fill="#0e5a84" />
          <path d="M12 0H23V14Q17 12 12 14z" fill="#3d9cc9" />
          <path d="M1 20Q8 14 23 16V20Q10 19 3 24z" fill="#d7e3ea" />
          <text x="2.500" y="16.500" fontSize="19" fontFamily="Open Sans" fontWeight="700" fill="#fff">P</text>
          <circle cx="18" cy="7.500" r="2.800" fill="none" stroke="#d8f0fb" strokeWidth="1" />
          <path d="M18 3V8" stroke="#d8f0fb" />
        </svg>
        <div className="flex h-[2px] w-full bg-[#4d83b3]"><div className="w-[32px] bg-[#76b9ed]" /></div>
      </div>
      <div className="ml-[9px] flex w-[40px] flex-col items-center justify-between pt-[9px]">
        <svg width="22" height="22" viewBox="0 0 22 22">
          <circle cx="11" cy="11" r="11" fill="#4caf50" />
          <path d="M1.500 5.500A11 11 0 0 1 20.500 5.500H11L6.500 13.500z" fill="#e0453a" />
          <path d="M20.500 5.500A11 11 0 0 1 10.500 22L15.500 13.500L11 5.500z" fill="#fdd23e" />
          <circle cx="11" cy="11" r="5.200" fill="#fff" />
          <circle cx="11" cy="11" r="4.100" fill="#4688f1" />
        </svg>
        <div className="h-[2px] w-full bg-[#76b9ed]" />
      </div>
      <div className="ml-[9px] flex w-[40px] flex-col items-center justify-between pt-[8px]">
        <svg width="24" height="24" viewBox="0 0 24 24">
          <circle cx="12" cy="12" r="11.800" fill="#c9cdcc" />
          <circle cx="12" cy="12" r="9.800" fill="#dde0df" />
          <path d="M4 17V11L8 9L11 10L15 7L20 7.500V17z" fill="#3c6660" />
          <path d="M4 14Q9 10 13 14T20 12V17H4z" fill="#27463f" />
        </svg>
        <div className="h-[2px] w-full bg-[#76b9ed]" />
      </div>
      <div className="ml-[5px] flex w-[44px] flex-col items-center justify-between bg-[#5b5b5b] pt-[9px]">
        <svg className="ml-[3px]" width="22" height="22" viewBox="0 0 22 22">
          <rect x="11" y="3" width="10.500" height="16" fill="#fff" stroke="#1e7145" />
          <path d="M12 6H21M12 9H21M12 12H21M12 15H21M16.500 4V18" stroke="#1e7145" />
          <path d="M0 2.500L13 0V22L0 19.500z" fill="#1e7145" />
          <path d="M3.500 7L9 15M9 7L3.500 15" stroke="#fff" strokeWidth="1.900" />
        </svg>
        <div className="h-[2px] w-full bg-[#76b9ed]" />
      </div>
      <div className="flex w-[4px] flex-col justify-end border-l border-[#333] bg-[#4a4a4a]"><div className="h-[2px] bg-[#76b9ed]" /></div>
    </div>
  );
}

export default function App() {
  return (
    <div className="flex h-[1080px] w-[1213px] flex-col overflow-hidden bg-[#1a80d8]">
      <div className="flex h-[1040px] flex-col border-x border-t border-[#33373c]">
        <div className="flex h-[29px] shrink-0 items-stretch justify-between">
          <T className="mt-[5px] ml-[15px] w-[57px] font-['Open_Sans',sans-serif] text-[11.500px] leading-[20px] text-white">UserForm1</T>
          <div className="mr-[6px] flex w-[34px] items-center justify-center border-x border-b border-[#6d3f43] bg-[#c4594f]">
            <svg width="9" height="9" viewBox="0 0 9 9" stroke="#000" strokeWidth="2.300">
              <path d="M1 0.500L8 8.500M8 0.500L1 8.500" />
            </svg>
          </div>
        </div>
        <div className="mr-[7px] ml-[7px] flex min-h-0 flex-1 border-t-2 border-l border-[#6d7379] bg-white">
          <div className="flex h-[1008px] min-w-0 flex-1 overflow-hidden">
            <LeftColumn />
            <div className="flex min-w-0 flex-1 flex-col">
              <PresenterHeader />
              <div className="flex min-h-0 flex-1">
                <Steps />
                <AdjustPanel />
              </div>
            </div>
          </div>
          <div className="w-[17px] shrink-0 bg-[conic-gradient(#efefef_25%,#fff_25%_50%,#efefef_50%_75%,#fff_75%)] bg-[length:2px_2px]">
            <div className="flex h-[16px] items-center justify-center border border-t-[#e3e3e3] border-r-[#696969] border-b-[#696969] border-l-[#e3e3e3] bg-[#f0f0f0]">
              <svg width="7" height="4" viewBox="0 0 7 4"><path d="M3.500 0L7 4H0z" fill="#000" /></svg>
            </div>
          </div>
        </div>
      </div>
      <Taskbar />
    </div>
  );
}
